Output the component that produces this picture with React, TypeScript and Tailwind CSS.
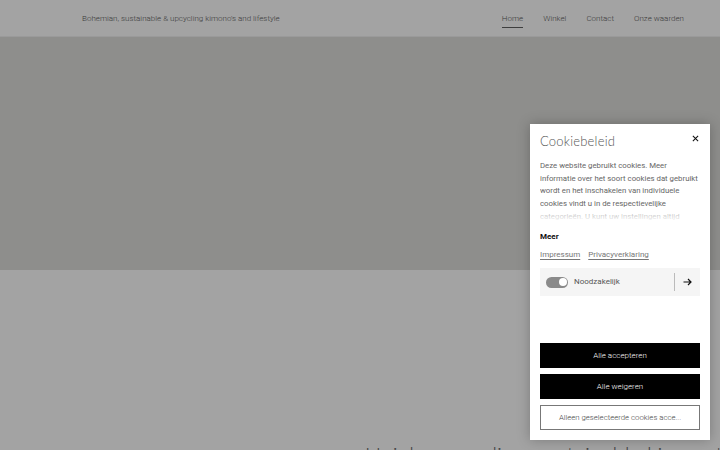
import React from 'react';

const App: React.FC = () => {
  return (
    <div className="relative w-[720px] h-[450px] overflow-hidden bg-[#a3a3a3] font-['Roboto',sans-serif]">
      <header className="h-[37px] flex items-center justify-between pt-[2px] pl-[82px] pr-[36px] bg-[#a3a3a3] border-b border-[#9a9a9a]">
        <p className="text-[8px] font-light text-[#3a3a3a]">Bohemian, sustainable &amp; upcycling kimono's and lifestyle</p>
        <nav className="flex items-center gap-[20px] text-[8px] font-light text-[#3a3a3a]">
          <a className="relative">
            Home
            <span className="absolute left-0 right-0 -bottom-[3px] h-[1.5px] bg-[#3e3e3e]" />
          </a>
          <a>Winkel</a>
          <a>Contact</a>
          <a>Onze waarden</a>
        </nav>
      </header>

      <section className="h-[233px] bg-[#8e8e8c]" />

      <section className="pt-[168px] pl-[365px]">
        <h2 className="text-[22px] font-light text-[#444] whitespace-nowrap font-['Lato',sans-serif]">Unieke upcycling, sustainable kimono's</h2>
      </section>

      {/* cookie dialog */}
      <div className="absolute left-[530px] top-[124px] w-[180px] h-[316px] bg-white shadow-[0_0_12px_rgba(0,0,0,0.25)] flex flex-col px-[10px] pt-[8px] pb-[10px]">
        <div className="flex items-center justify-between h-[20px]">
          <h3 className="text-[13px] font-light text-[#555] font-['Lato',sans-serif] tracking-[0.2px]">Cookiebeleid</h3>
          <button className="mr-[1px] -mt-[8px] text-[#111]">
            <svg width="7" height="7" viewBox="0 0 8 8" stroke="currentColor" strokeWidth="1.2">
              <path d="M1 1L7 7M7 1L1 7" />
            </svg>
          </button>
        </div>

        <div className="relative mt-[8px] h-[62px] overflow-hidden">
          <p className="text-[7.8px] leading-[12.7px] text-[#666]">
            Deze website gebruikt cookies. Meer informatie over het soort cookies dat gebruikt wordt en het inschakelen van individuele cookies vindt u in de respectievelijke categorieën. U kunt uw instellingen altijd wijzigen.
          </p>
          <div className="absolute left-0 right-0 bottom-0 h-[12px] bg-gradient-to-b from-white/40 to-white" />
        </div>

        <p className="mt-[9px] text-[8px] font-bold text-[#111]">Meer</p>
        <div className="mt-[6px] flex gap-[8px] text-[8px] text-[#777]">
          <a className="underline underline-offset-[1.5px]">Impressum</a>
          <a className="underline underline-offset-[1.5px]">Privacyverklaring</a>
        </div>

        <div className="mt-[7px] h-[28px] bg-[#f5f5f5] flex items-center pl-[6px] pr-[8px]">
          <div className="w-[22px] h-[11px] rounded-full bg-[#8a8a8a] relative">
            <span className="absolute right-[1.5px] top-[1.5px] w-[8px] h-[8px] rounded-full bg-white" />
          </div>
          <span className="ml-[6px] text-[8px] text-[#555]">Noodzakelijk</span>
          <div className="ml-auto h-[18px] w-px bg-[#bbb]" />
          <svg className="ml-[8px]" width="9" height="8" viewBox="0 0 9 8" fill="none" stroke="#111" strokeWidth="1.2">
            <path d="M0.5 4H8M5 1L8 4L5 7" />
          </svg>
        </div>

        <div className="mt-auto flex flex-col gap-[6px]">
          <button className="h-[25px] bg-black text-white text-[8px] font-light">Alle accepteren</button>
          <button className="h-[25px] bg-black text-white text-[8px] font-light">Alle weigeren</button>
          <button className="h-[25px] bg-white border border-[#777] text-[#444] text-[7.8px] font-light">Alleen geselecteerde cookies acce...</button>
        </div>
      </div>
    </div>
  );
};

export default App;
